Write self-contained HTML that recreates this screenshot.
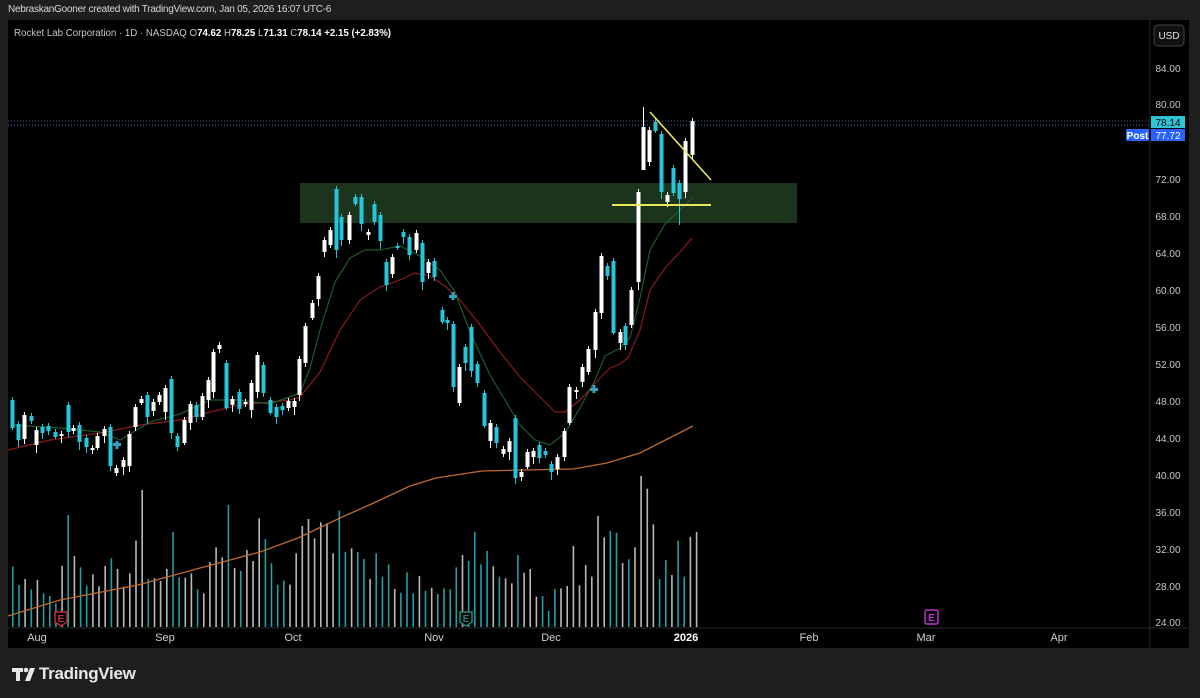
<!DOCTYPE html>
<html><head><meta charset="utf-8"><style>
html,body{margin:0;padding:0;background:#1e1e1e;width:1200px;height:698px;overflow:hidden;font-family:"Liberation Sans",sans-serif}
#hdr{position:absolute;left:8px;top:4px;font-size:10px;color:#d8d8d8;letter-spacing:-0.25px}
#chart{position:absolute;left:8px;top:20px;width:1181px;height:628px;background:#000}
svg{position:absolute;left:0;top:0}
#gen,#gen2{position:absolute;left:0;top:0;width:1200px;height:698px}
#logo{position:absolute;left:39px;top:664px;color:#e8e8e8;font-size:17px;font-weight:bold;letter-spacing:-0.3px}
</style></head><body>
<div id="hdr">NebraskanGooner created with TradingView.com, Jan 05, 2026 16:07 UTC-6</div>
<div id="chart"></div>
<svg width="1200" height="698" xmlns="http://www.w3.org/2000/svg">
<rect x="300" y="183" width="497" height="40" fill="#1e3a1e" opacity="0.9"/>
<line x1="1150" y1="20" x2="1150" y2="648" stroke="#2a2a2a"/>
<line x1="8" y1="628" x2="1189" y2="628" stroke="#2a2a2a"/>
<line x1="8" y1="121" x2="1150" y2="121" stroke="#3b5f9a" stroke-dasharray="1,2"/>
<line x1="8" y1="125" x2="1150" y2="125" stroke="#3b5f9a" stroke-dasharray="1,2"/>
</svg>
<div id="gen2"></div>
<svg width="1200" height="698" xmlns="http://www.w3.org/2000/svg">
<polyline fill="none" stroke="#c0692a" stroke-width="1.3" points="8,616 60,600 138,585 200,568 260,552 298,538 340,518 376,502 410,486 436,478 482,471 523,470 573,469 607,463 640,453 693,426"/>
<polyline fill="none" stroke="#8b1a1a" stroke-width="1.2" points="8,450 50,440 100,433 140,425 180,420 210,412 240,405 270,402 290,400 300,397 320,372 340,330 360,300 380,287 400,280 415,273 430,276 445,286 460,300 480,325 500,352 520,377 540,397 555,412 565,412 580,400 600,378 610,368 620,364 628,358 640,330 650,290 665,268 680,252 692,238"/>
<polyline fill="none" stroke="#1f5a2a" stroke-width="1.2" points="12,425 60,428 100,432 120,440 150,422 180,414 210,400 240,400 270,404 300,393 310,368 320,330 335,282 350,258 365,250 380,250 400,246 420,256 440,270 455,292 470,332 490,375 505,400 520,425 535,440 550,445 565,433 580,408 595,380 605,356 620,348 630,338 640,298 650,250 665,224 680,210 692,198"/>
</svg>
<div id="gen"></div>
<svg width="1200" height="698" xmlns="http://www.w3.org/2000/svg">
<line x1="612" y1="205" x2="711" y2="205" stroke="#e8e85a" stroke-width="2"/>
<line x1="650" y1="112" x2="711" y2="180" stroke="#e8e85a" stroke-width="1.6"/>
<g fill="#3aa0c0"><rect x="113" y="443" width="8" height="3"/><rect x="115.5" y="441" width="3" height="8"/>
<rect x="449" y="295" width="8" height="3"/><rect x="451.5" y="292" width="3" height="8"/>
<rect x="590" y="388" width="8" height="3"/><rect x="592.5" y="385" width="3" height="8"/></g>
<g font-size="10" font-weight="bold" text-anchor="middle">
<path d="M55 612h12v10l-6 4-6-4z" fill="#000" stroke="#c0303a" stroke-width="1.5"/><text x="61" y="622" fill="#c0303a">E</text>
<path d="M460 612h12v10l-6 4-6-4z" fill="#000" stroke="#1f8a78" stroke-width="1.5"/><text x="466" y="622" fill="#1f8a78">E</text>
<rect x="925" y="610" width="13" height="14" rx="2" fill="none" stroke="#c030d0" stroke-width="1.5"/><text x="931.5" y="621" fill="#c030d0">E</text>
</g>
<g font-size="10" fill="#c8c8c8" text-anchor="middle">
<text x="1168" y="72">84.00</text><text x="1168" y="108">80.00</text><text x="1168" y="183">72.00</text><text x="1168" y="220">68.00</text><text x="1168" y="257">64.00</text><text x="1168" y="294">60.00</text><text x="1168" y="331">56.00</text><text x="1168" y="368">52.00</text><text x="1168" y="405">48.00</text><text x="1168" y="442">44.00</text><text x="1168" y="479">40.00</text><text x="1168" y="516">36.00</text><text x="1168" y="553">32.00</text><text x="1168" y="590">28.00</text><text x="1168" y="626">24.00</text>
</g>
<g font-size="11" fill="#d0d0d0" text-anchor="middle">
<text x="37" y="641">Aug</text><text x="165" y="641">Sep</text><text x="293" y="641">Oct</text><text x="434" y="641">Nov</text><text x="551" y="641">Dec</text><text x="686" y="641" fill="#fff" font-weight="bold">2026</text><text x="809" y="641">Feb</text><text x="926" y="641">Mar</text><text x="1059" y="641">Apr</text>
</g>
<rect x="1154" y="25" width="30" height="21" rx="4" fill="#111" stroke="#444"/>
<text x="1169" y="39" font-size="10" fill="#e0e0e0" text-anchor="middle">USD</text>
<rect x="1151" y="116" width="34" height="12" fill="#2ec4d4"/>
<text x="1168" y="126" font-size="10" fill="#000" text-anchor="middle">78.14</text>
<rect x="1126" y="129" width="23" height="12" fill="#2962ff"/>
<text x="1137.5" y="139" font-size="10" fill="#fff" font-weight="bold" text-anchor="middle">Post</text>
<rect x="1151" y="129" width="34" height="12" fill="#2962ff"/>
<text x="1168" y="139" font-size="10" fill="#fff" text-anchor="middle">77.72</text>
<text x="14" y="36" font-size="9.7" fill="#c8c8c8">Rocket Lab Corporation · 1D · NASDAQ <tspan>O</tspan><tspan fill="#fff" font-weight="bold">74.62</tspan> H<tspan fill="#fff" font-weight="bold">78.25</tspan> L<tspan fill="#fff" font-weight="bold">71.31</tspan> C<tspan fill="#fff" font-weight="bold">78.14</tspan> <tspan fill="#fff" font-weight="bold">+2.15 (+2.83%)</tspan></text>
<g fill="#e8e8e8"><rect x="12" y="668" width="11" height="4"/><rect x="16" y="668" width="4" height="13"/><circle cx="26" cy="670" r="2.3"/><path d="M30 668h5l-5 13h-5z"/></g>
</svg>
<div id="logo">TradingView</div>
<script>
var C=[[12,400,428,'c'],[18,424,440,'c'],[24,415,439,'w'],[31,416,421,'c'],[36,430,445,'w'],[42,427,433,'c'],[48,426,431,'c'],[55,432,437,'c'],[61,434,436,'w'],[68,405,432,'c'],[73,428,431,'w'],[79,425,442,'c'],[86,438,447,'c'],[92,448,450,'w'],[97,436,448,'w'],[104,429,436,'w'],[110,427,466,'c'],[116,468,473,'w'],[123,460,467,'w'],[129,434,466,'w'],[135,407,427,'w'],[141,399,403,'w'],[147,395,417,'c'],[153,402,411,'w'],[159,395,402,'w'],[165,388,412,'w'],[171,379,433,'c'],[177,436,447,'c'],[184,420,443,'w'],[190,404,423,'w'],[196,405,417,'c'],[202,396,417,'w'],[208,380,400,'w'],[213,352,392,'w'],[219,345,349,'w'],[226,363,408,'c'],[232,399,405,'w'],[239,392,409,'c'],[245,402,404,'w'],[251,383,410,'w'],[257,355,392,'w'],[263,365,393,'c'],[270,400,413,'c'],[276,407,417,'c'],[282,406,410,'c'],[288,401,408,'w'],[294,401,407,'w'],[299,359,395,'w'],[305,326,363,'w'],[312,303,318,'w'],[318,276,299,'w'],[324,240,252,'w'],[330,230,245,'w'],[336,189,250,'c'],[341,217,240,'c'],[349,215,240,'w'],[355,197,204,'c'],[361,197,224,'c'],[368,232,235,'w'],[374,204,222,'c'],[380,215,241,'c'],[386,262,285,'c'],[392,257,274,'w'],[397,246,248,'c'],[403,232,237,'c'],[409,237,255,'c'],[416,233,250,'w'],[422,243,282,'c'],[428,262,273,'w'],[434,261,277,'c'],[442,310,322,'c'],[447,320,323,'c'],[453,324,387,'c'],[459,367,403,'w'],[465,347,363,'c'],[471,327,371,'c'],[477,364,383,'c'],[484,393,426,'c'],[490,423,441,'w'],[496,427,443,'c'],[503,449,454,'w'],[509,441,452,'w'],[515,418,478,'c'],[521,472,477,'w'],[527,452,467,'w'],[533,451,457,'w'],[539,445,458,'c'],[545,451,455,'c'],[551,464,472,'c'],[557,457,469,'w'],[564,431,457,'w'],[569,387,423,'w'],[576,390,392,'w'],[582,367,382,'w'],[588,349,372,'w'],[595,312,350,'w'],[601,256,313,'w'],[607,266,276,'c'],[613,261,333,'c'],[620,332,343,'w'],[625,326,345,'c'],[631,290,325,'w'],[638,192,282,'w'],[643,127,170,'w'],[649,130,162,'w'],[655,122,131,'c'],[661,134,192,'c'],[667,195,202,'w'],[673,168,193,'c'],[679,183,199,'c'],[685,141,192,'w'],[692,121,155,'w']];
var h='<svg width="1200" height="698" xmlns="http://www.w3.org/2000/svg">';
for(var i=0;i<C.length;i++){var c=C[i];var col=c[3]=='w'?'#ffffff':'#26c6da';var t=c[1]-3-(i*7%7),b=c[2]+2+(i*5%7);if(i==103){t=107;b=152}if(i==109){b=225}
h+='<line x1="'+(c[0]+0.5)+'" y1="'+t+'" x2="'+(c[0]+0.5)+'" y2="'+b+'" stroke="'+col+'" stroke-width="1"/><rect x="'+(c[0]-1.5)+'" y="'+c[1]+'" width="4" height="'+Math.max(2,c[2]-c[1])+'" fill="'+col+'"/>';}
h+='</svg>';
document.getElementById('gen').innerHTML=h;
var V=[290,345,327,358,330,370,378,400,287,135,258,292,347,313,349,288,265,297,350,310,212,60,327,325,333,297,186,322,323,310,358,370,276,232,262,105,294,303,240,273,145,207,280,344,332,344,250,168,147,205,157,160,250,122,246,235,246,267,327,250,320,283,357,368,307,370,318,362,353,372,355,358,292,255,273,186,283,243,289,320,325,340,255,308,297,380,378,423,357,355,348,228,346,285,320,138,202,183,188,279,268,232,18,56,163,327,270,315,212,320,200,186];
var v='<svg width="1200" height="698" xmlns="http://www.w3.org/2000/svg">';
for(var j=0;j<V.length;j++){var vx=12+j*6.16;var cc=C[Math.min(j,C.length-1)];var col2=cc[3]=='w'?'#b8b8b8':'#1f9fa8';var vt=470+V[j]/3;v+='<rect x="'+vx.toFixed(1)+'" y="'+vt.toFixed(1)+'" width="1.6" height="'+(627-vt).toFixed(1)+'" fill="'+col2+'"/>';}
v+='</svg>';
document.getElementById('gen2').innerHTML=v;
</script>
</body></html>
